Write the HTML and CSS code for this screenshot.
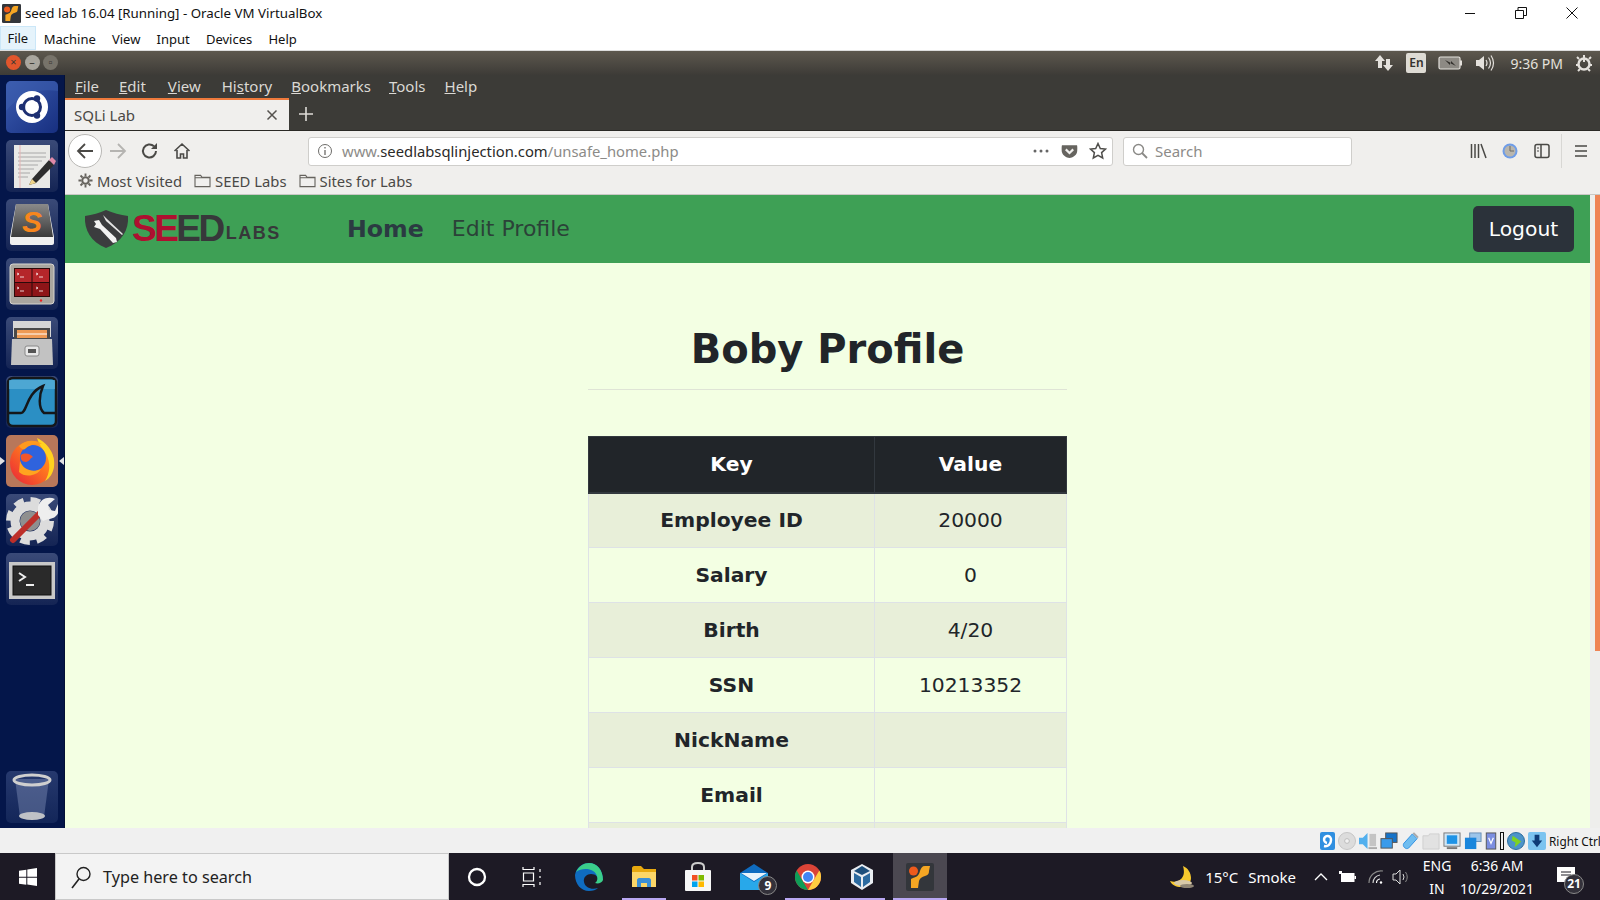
FILE: index.html
```html
<!DOCTYPE html>
<html lang="en">
<head>
<meta charset="utf-8">
<title>seed lab 16.04 [Running] - Oracle VM VirtualBox</title>
<link rel="stylesheet" href="styles.css">
</head>
<body>
<svg class="defs" width="0" height="0">
  <symbol id="vmicon" viewBox="0 0 28 28">
    <rect width="28" height="28" rx="2" fill="#33363b"/>
    <circle cx="7.5" cy="8" r="4.5" fill="#ee5a1c"/>
    <path d="M24 3h-5c-3 0-4 2-5 5-1 4-3 6-7 7l-2 1v9h7l1-7c1-3 3-4 6-5 3-1 4-2 4-5z" fill="#f5a623"/>
  </symbol>
  <symbol id="folder" viewBox="0 0 18 16">
    <path d="M1 14.500V2.500h6l1.500 2h8.500v10z M1 5h16" fill="#f1f0ee" stroke="#66635e" stroke-width="1.200"/>
  </symbol>
</svg>

<header class="titlebar">
  <svg class="title-icon"><use href="#vmicon"/></svg>
  <span class="title-text">seed lab 16.04 [Running] - Oracle VM VirtualBox</span>
  <div class="winbtns">
    <svg width="12" height="12" viewBox="0 0 12 12"><path d="M1 6.500h10" stroke="#111" fill="none"/></svg>
    <svg width="12" height="12" viewBox="0 0 12 12"><path d="M.5 3.500h8v8h-8z M3 3.500V.5h8.500v8H8.500" stroke="#111" fill="none"/></svg>
    <svg width="12" height="12" viewBox="0 0 12 12"><path d="M.5.500l11 11M11.500.500l-11 11" stroke="#111" fill="none"/></svg>
  </div>
</header>
<nav class="vbmenu">
  <span class="vbitem vbactive">File</span><span class="vbitem">Machine</span><span class="vbitem">View</span><span class="vbitem">Input</span><span class="vbitem">Devices</span><span class="vbitem">Help</span>
</nav>

<div class="screen">
  <div class="panel">
    <div class="panelbtns">
      <span class="pbtn pclose">×</span><span class="pbtn pmin">–</span><span class="pbtn pmax">▫</span>
    </div>
    <div class="indicators">
      <svg class="ind-arrows" width="20" height="20" viewBox="0 0 20 20"><path d="M6 2l5 6H8v7H4V8H1z" fill="#e4e1dc"/><path d="M14 18l-5-6h3V6h4v6h3z" fill="#e4e1dc"/></svg>
      <span class="ind-en">En</span>
      <svg class="ind-batt" width="24" height="14" viewBox="0 0 24 14"><rect x="1" y="1" width="21" height="12" rx="1.500" fill="#8d8a84" stroke="#e4e1dc" stroke-width="1.200"/><rect x="22" y="4.500" width="2" height="5" fill="#e4e1dc"/><path d="M7 4l6 3 0-2 5 5-6-3 0 2z" fill="#2f2d29"/></svg>
      <svg class="ind-vol" width="20" height="18" viewBox="0 0 20 18"><path d="M1 6h3l5-4v14l-5-4H1z" fill="#e4e1dc"/><path d="M11 6q2 3 0 6M13.500 3.500q4 5.500 0 11M16 1.500q5 7.500 0 15" fill="none" stroke="#e4e1dc" stroke-width="1.200"/></svg>
      <span class="ind-time">9:36 PM</span>
      <svg class="ind-gear" width="18" height="18" viewBox="0 0 18 18"><circle cx="9" cy="10" r="5.500" fill="none" stroke="#e4e1dc" stroke-width="2.500"/><path d="M9 1v7" stroke="#e4e1dc" stroke-width="2"/><path d="M2 3l2 2M16 3l-2 2M1 11h2M15 11h2M3 17l2-2M15 17l-2-2" stroke="#e4e1dc" stroke-width="2"/></svg>
    </div>
  </div>
  <div class="desktop">
    <aside class="launcher">
      <div class="tile tile-ubuntu">
        <svg width="52" height="52" viewBox="0 0 52 52"><path d="M0 30Q20 5 52 10V0H0z" fill="#3d5fb0" opacity=".5"/><circle cx="26" cy="26" r="16" fill="#fff"/><circle cx="26" cy="26" r="8.500" fill="none" stroke="#1d2f72" stroke-width="3"/><circle cx="16" cy="26" r="3.200" fill="#1d2f72"/><circle cx="31" cy="17.500" r="3.200" fill="#1d2f72"/><circle cx="31" cy="34.500" r="3.200" fill="#1d2f72"/></svg>
      </div>
      <div class="tile">
        <svg width="52" height="52" viewBox="0 0 52 52"><rect x="8" y="5" width="36" height="43" fill="#e9e9e6"/><path d="M12 13h28M12 17h28M12 21h24M12 25h20M12 29h16M12 33h12M12 37h10" stroke="#a8a8a8"/><path d="M14 5v43" stroke="#e6b3b3"/><path d="M26 39l17-19 5 5-18 18-7 2z" fill="#2d2d2d"/><path d="M43 20l3-3 4 4-2 4z" fill="#e08aa8"/><path d="M26 39l4 4-7 2z" fill="#eed48a"/></svg>
      </div>
      <div class="tile">
        <svg width="52" height="52" viewBox="0 0 52 52"><defs><linearGradient id="subl" x1="0" y1="0" x2="0" y2="1"><stop offset="0" stop-color="#8a8a8a"/><stop offset="1" stop-color="#3a3a3a"/></linearGradient></defs><path d="M10 5h32l6 33v6c0 1-1 2-2 2H6c-1 0-2-1-2-2v-6z" fill="#f0f0f0"/><path d="M10 5h32l5 33H5z" fill="url(#subl)"/><text x="26" y="33" class="sublime">S</text></svg>
      </div>
      <div class="tile">
        <svg width="52" height="52" viewBox="0 0 52 52"><rect x="4" y="6" width="44" height="40" rx="3" fill="#a9a69f" stroke="#d8d6d0"/><rect x="8" y="10" width="36" height="29" fill="#2b0a0a"/><rect x="9" y="11" width="16.500" height="13" fill="#b5262a"/><rect x="26.500" y="11" width="16.500" height="13" fill="#b5262a"/><rect x="9" y="25" width="16.500" height="13" fill="#8e1518"/><rect x="26.500" y="25" width="16.500" height="13" fill="#8e1518"/><path d="M11 15l2 1-2 1M30 15l2 1-2 1M11 29l2 1-2 1M30 29l2 1-2 1M14 19h4M33 19h4M14 33h4M33 33h4" stroke="#fff" fill="none" stroke-width=".8"/><circle cx="35" cy="42.500" r="1.200" fill="#e22"/></svg>
      </div>
      <div class="tile">
        <svg width="52" height="52" viewBox="0 0 52 52"><path d="M7 4h38v16H7z" fill="#d6d6d6"/><path d="M8 11h36v13H8z" fill="#4a4a4a"/><path d="M11 13h30v8H11z" fill="#ee9a55"/><path d="M11 17h30" stroke="#fff"/><path d="M6 22h40l1 26H5z" fill="#c2c2c2"/><rect x="19" y="29" width="14" height="10" rx="2" fill="#e8e8e8" stroke="#888"/><rect x="22" y="32" width="8" height="4" fill="#555"/></svg>
      </div>
      <div class="tile">
        <svg width="52" height="52" viewBox="0 0 52 52"><rect x="2" y="2" width="48" height="48" rx="5" fill="#2b8fc4" stroke="#14171a" stroke-width="2.500"/><path d="M3 4h46v9H3z" fill="#5db0da" opacity=".7"/><path d="M3 37h12c6 0 5-20 22-27-4 9-5 22 1 27h11" fill="none" stroke="#14171a" stroke-width="2.500"/></svg>
      </div>
      <div class="tile tile-firefox">
        <svg width="52" height="52" viewBox="0 0 52 52"><defs><linearGradient id="ffx" x1="0" y1="1" x2="1" y2="0"><stop offset="0" stop-color="#e8203a"/><stop offset=".6" stop-color="#ff7a1e"/><stop offset="1" stop-color="#ffb71f"/></linearGradient></defs><circle cx="26" cy="28" r="22" fill="url(#ffx)"/><path d="M31 3c11 5 19 17 17 29-1 6-4 11-9 14 5-8 6-18 1-27-3-5-7-9-9-16z" fill="#ffd21f"/><circle cx="27" cy="23" r="13" fill="#2f63dd"/><path d="M13 11c6-6 16-7 23-2-7-1-13 1-17 5-1 1-4 0-6-3z" fill="#ff9a1e"/><path d="M14 26c3 9 13 12 21 8-4 7-16 9-22 3z" fill="#ffa41f"/><path d="M15 20c5-3 9-1 12 2-3 1-4 5-7 5-4 0-6-3-5-7z" fill="#f0562c"/></svg>
      </div>
      <div class="tile">
        <svg width="52" height="52" viewBox="0 0 52 52"><circle cx="24" cy="27" r="15" fill="none" stroke="#dcdcdc" stroke-width="9"/><circle cx="24" cy="27" r="21" fill="none" stroke="#dcdcdc" stroke-width="6" stroke-dasharray="9.500 6.980"/><circle cx="24" cy="27" r="10" fill="#8f8f8f"/><path d="M7 46L36 17" stroke="#bd2f2a" stroke-width="6" stroke-linecap="round"/><path d="M32 13c2-8 10-11 17-8l-7 6 1 5 6 1 3-7c3 7-1 15-10 15l-5 2-5-6z" fill="#eee"/></svg>
      </div>
      <div class="tile">
        <svg width="52" height="52" viewBox="0 0 52 52"><rect x="3" y="9" width="46" height="37" fill="#c8c8c8"/><rect x="7" y="13" width="38" height="29" fill="#2a2a2a" stroke="#111"/><path d="M13 20l6 4-6 4" fill="none" stroke="#eee" stroke-width="2"/><path d="M20 32h8" stroke="#eee" stroke-width="2"/></svg>
      </div>
      <div class="tile tile-trash">
        <svg width="52" height="52" viewBox="0 0 52 52"><path d="M9 8h34l-5 38H14z" fill="#7f8fb6" opacity=".45"/><ellipse cx="26" cy="9" rx="18" ry="5" fill="none" stroke="#cfcfcf" stroke-width="3"/><ellipse cx="26" cy="45" rx="13" ry="4" fill="#bfc2c6"/></svg>
      </div>
    </aside>

    <div class="browser">
      <div class="ffmenu">
        <span class="ffitem"><u>F</u>ile</span><span class="ffitem ff-edit"><u>E</u>dit</span><span class="ffitem ff-view"><u>V</u>iew</span><span class="ffitem ff-hist">Hi<u>s</u>tory</span><span class="ffitem ff-book"><u>B</u>ookmarks</span><span class="ffitem ff-tools"><u>T</u>ools</span><span class="ffitem"><u>H</u>elp</span>
      </div>
      <div class="tabs">
        <div class="tab">
          <span>SQLi Lab</span>
          <svg width="12" height="12" viewBox="0 0 12 12"><path d="M1.500 1.500l9 9M10.500 1.500l-9 9" stroke="#55524e" stroke-width="1.500"/></svg>
        </div>
        <svg class="newtab" width="16" height="16" viewBox="0 0 16 16"><path d="M8 1v14M1 8h14" stroke="#dedcd8" stroke-width="1.600"/></svg>
      </div>
      <div class="toolbar">
        <span class="backbtn"><svg width="18" height="18" viewBox="0 0 18 18"><path d="M2 9h15M9 2L2 9l7 7" fill="none" stroke="#4a4946" stroke-width="1.800"/></svg></span>
        <svg class="tool-fwd" width="18" height="18" viewBox="0 0 18 18"><path d="M1 9h15M9 2l7 7-7 7" fill="none" stroke="#b5b4b1" stroke-width="1.800"/></svg>
        <svg class="tool-reload" width="18" height="18" viewBox="0 0 18 18"><path d="M15 9a6.500 6.500 0 1 1-2-4.700" fill="none" stroke="#4a4946" stroke-width="2"/><path d="M16 1v6h-6z" fill="#4a4946"/></svg>
        <svg class="tool-home" width="18" height="18" viewBox="0 0 18 18"><path d="M1.500 9L9 2l7.500 7M4 8v8h3.500v-4h3v4H14V8" fill="none" stroke="#4a4946" stroke-width="1.600"/></svg>
        <div class="urlbar">
          <svg class="url-info" width="16" height="16" viewBox="0 0 16 16"><circle cx="8" cy="8" r="6.500" fill="none" stroke="#6d6c69"/><path d="M8 7v5M8 4v1.500" stroke="#6d6c69" stroke-width="1.300"/></svg>
          <span class="url-text"><span class="url-dim">www.</span>seedlabsqlinjection.com<span class="url-dim">/unsafe_home.php</span></span>
          <svg class="url-dots" width="16" height="4" viewBox="0 0 16 4"><circle cx="2" cy="2" r="1.500" fill="#666"/><circle cx="8" cy="2" r="1.500" fill="#666"/><circle cx="14" cy="2" r="1.500" fill="#666"/></svg>
          <svg class="url-pocket" width="17" height="17" viewBox="0 0 16 16"><path d="M1 2h14c.5 0 .5 6 0 7-1 3-4 5-7 5s-6-2-7-5C.5 8 .5 2 1 2z" fill="#66645f"/><path d="M4.500 6L8 9.500 11.500 6" fill="none" stroke="#f1f0ee" stroke-width="2"/></svg>
          <svg class="url-star" width="18" height="18" viewBox="0 0 18 18"><path d="M9 1.500l2.300 5 5.200.6-3.900 3.500 1.100 5.400L9 13.300 4.300 16l1.100-5.400L1.500 7.100l5.200-.6z" fill="none" stroke="#4f4e4b" stroke-width="1.500"/></svg>
        </div>
        <div class="searchbar">
          <svg width="16" height="16" viewBox="0 0 16 16"><circle cx="6.500" cy="6.500" r="5" fill="none" stroke="#8a8986" stroke-width="1.400"/><path d="M10 10l5 5" stroke="#8a8986" stroke-width="1.800"/></svg>
          <span>Search</span>
        </div>
        <div class="tool-right">
          <svg class="tr-lib" width="17" height="16" viewBox="0 0 17 16"><path d="M1.500 1v14M5 1v14M8.500 1v14M11 1l5 14" fill="none" stroke="#4a4946" stroke-width="1.500"/></svg>
          <svg class="tr-sync" width="16" height="16" viewBox="0 0 16 16"><circle cx="8" cy="8" r="7.500" fill="#6f9de8"/><circle cx="8" cy="8" r="5.500" fill="#b9b6ae"/><path d="M8 3v5h4" fill="none" stroke="#6b6a66"/></svg>
          <svg class="tr-side" width="16" height="16" viewBox="0 0 16 16"><rect x="1" y="1.500" width="14" height="13" rx="2" fill="none" stroke="#4a4946" stroke-width="1.500"/><path d="M7 2v12" stroke="#4a4946" stroke-width="1.500"/><path d="M3 5h2M3 8h2" stroke="#4a4946"/></svg>
          <span class="tr-sep"></span>
          <svg class="tr-menu" width="14" height="14" viewBox="0 0 14 14"><path d="M1 2h12M1 7h12M1 12h12" stroke="#4a4946" stroke-width="1.600"/></svg>
        </div>
      </div>
      <div class="bookmarks">
        <span class="bm bm-first"><svg width="15" height="15" viewBox="0 0 16 16"><circle cx="8" cy="8" r="3.500" fill="none" stroke="#66635e" stroke-width="2.200"/><path d="M8 .5v3M8 12.500v3M.5 8h3M12.500 8h3M2.700 2.700l2.100 2.100M11.200 11.200l2.100 2.100M13.300 2.700l-2.100 2.100M4.800 11.200l-2.100 2.100" stroke="#66635e" stroke-width="2"/></svg>Most Visited</span>
        <span class="bm"><svg width="17" height="15"><use href="#folder"/></svg>SEED Labs</span>
        <span class="bm"><svg width="17" height="15"><use href="#folder"/></svg>Sites for Labs</span>
      </div>
      <div class="viewport">
        <div class="page">
          <div class="sitenav">
            <div class="logo">
              <svg width="46" height="40" viewBox="0 0 46 40"><path d="M1 7C8 6 16 4 22 1c7 3 14 5 22 6 1 14-6 26-22 32C7 33 0 21 1 7z" fill="#3b3c3e"/><path d="M12 11l5-1 3 5 14 13 1 4-4 1L18 19l-6-2 2-3z" fill="#f2f2f2" transform="translate(-2 1)"/><path d="M19 6l4 4 16 15-1 1L22 12z" fill="#e4e4e4"/></svg>
              <span class="logo-seed"><span class="logo-red">SE</span>ED</span><span class="logo-labs">LABS</span>
            </div>
            <a class="nav-home">Home</a>
            <a class="nav-edit">Edit Profile</a>
            <button class="logout">Logout</button>
          </div>
          <main class="content">
            <h1 class="profile-title">Boby Profile</h1>
            <hr class="rule">
            <table class="profile">
              <thead><tr><th>Key</th><th>Value</th></tr></thead>
              <tbody>
                <tr><th>Employee ID</th><td>20000</td></tr>
                <tr><th>Salary</th><td>0</td></tr>
                <tr><th>Birth</th><td>4/20</td></tr>
                <tr><th>SSN</th><td>10213352</td></tr>
                <tr><th>NickName</th><td></td></tr>
                <tr><th>Email</th><td></td></tr>
                <tr><th></th><td></td></tr>
              </tbody>
            </table>
          </main>
        </div>
        <div class="scrollbar"><span class="thumb"></span></div>
      </div>
    </div>
  </div>
</div>

<div class="statusbar">
  <svg class="sb-first" viewBox="0 0 15 18"><rect width="15" height="18" rx="2" fill="#2f8fe0"/><path d="M4 14c4 1 7-2 7-6a3.500 3.500 0 1 0-4 3" fill="none" stroke="#fff" stroke-width="2.500"/></svg>
  <svg viewBox="0 0 19 19"><circle cx="9.500" cy="9.500" r="9" fill="#dcdcdc" stroke="#c4c4c4"/><circle cx="9.500" cy="9.500" r="2.500" fill="#f2f2f2" stroke="#bbb"/></svg>
  <svg viewBox="0 0 19 19"><path d="M0 6h4l5-5v17l-5-5H0z" fill="#52b0ee"/><rect x="11" y="2" width="7" height="13" fill="#c4c4c4"/><path d="M10 17h9" stroke="#aaa" stroke-width="2"/></svg>
  <svg viewBox="0 0 19 19"><rect x="6" y="1" width="12" height="10" fill="#1673c8" stroke="#555"/><rect x="1" y="7" width="12" height="10" fill="#3a9bea" stroke="#555"/></svg>
  <svg viewBox="0 0 19 19"><path d="M12 2l5 5-9 10c-3 2-7-2-5-5z" fill="#6fbdf0" stroke="#2f8fe0"/><path d="M13 1l5 5" stroke="#aaa" stroke-width="2"/></svg>
  <svg viewBox="0 0 19 19"><path d="M1 4h6l1-2h10v16H1z" fill="#e2e2e2" stroke="#cfcfcf"/></svg>
  <svg viewBox="0 0 19 19"><rect x="1" y="1" width="17" height="14" fill="#d0e6f5" stroke="#777"/><rect x="4" y="3.500" width="11" height="9" fill="#1e93e6"/><path d="M4 17h11" stroke="#777" stroke-width="2"/></svg>
  <svg viewBox="0 0 19 19"><rect x="6" y="1" width="12" height="9" fill="#9cc5ea" stroke="#6a8fb5"/><rect x="1" y="6" width="12" height="12" fill="#1a86dc"/></svg>
  <svg class="sb-chip" viewBox="0 0 12 19"><rect x="1" y="1" width="10" height="17" fill="#7c8ee0" stroke="#555"/><path d="M3.500 6l2.500 6 2.500-6" fill="none" stroke="#fff" stroke-width="1.300"/></svg>
  <span class="sb-bar"></span>
  <svg viewBox="0 0 19 19"><circle cx="9.500" cy="9.500" r="9" fill="#4c94c9" stroke="#2a6a9c"/><path d="M6 4l9 6-7 6 1-5-4-2z" fill="#7ed321"/></svg>
  <svg viewBox="0 0 19 19"><rect width="19" height="19" rx="2" fill="#7cc4f0"/><path d="M7 3h5v6h3l-5.500 7L4 9h3z" fill="#0e3c78"/></svg>
  <span class="sb-text">Right Ctrl</span>
</div>

<footer class="taskbar">
  <div class="start"><svg width="18" height="18" viewBox="0 0 18 18"><path d="M0 2.700l7.300-1v7H0zM8.300 1.600L18 0v8.700H8.300zM0 9.700h7.300v7l-7.300-1zM8.300 9.700H18V18l-9.700-1.400z" fill="#fff"/></svg></div>
  <div class="tsearch">
    <svg width="22" height="24" viewBox="0 0 22 24"><circle cx="13.500" cy="9" r="6.500" fill="none" stroke="#222" stroke-width="1.400"/><path d="M9 14L2 23" stroke="#222" stroke-width="1.600"/></svg>
    <span>Type here to search</span>
  </div>
  <div class="titem titem-sys"><svg width="20" height="20" viewBox="0 0 20 20"><circle cx="10" cy="10" r="8" fill="none" stroke="#fff" stroke-width="2.300"/></svg></div>
  <div class="titem titem-sys"><svg width="22" height="22" viewBox="0 0 22 22"><path d="M2 1v2.500h11V1M2 21v-2.500h11V21M2.500 7h10v8h-10zM19 3v3M19 10v2M19 16v3" fill="none" stroke="#fff" stroke-width="1.200"/></svg></div>
  <div class="apps">
    <div class="titem"><svg width="28" height="28" viewBox="0 0 28 28"><path d="M14 0C6 0 1 6 0 12c0 9 6 16 14 16 4 0 7-1 9-3-6 2-13 0-14-6-1-5 3-8 7-8 5 0 7 3 7 6h5C28 7 22 0 14 0z" fill="#0f6cc0"/><path d="M1 9C4 3 9 0 14 0c8 0 14 7 14 17-1 3-5 4-8 3 3-2 3-6 1-9-3-5-13-7-20-2z" fill="#3bce8a"/></svg></div>
    <div class="titem titem-open"><svg width="26" height="24" viewBox="0 0 26 24"><path d="M1 3c0-1 1-2 2-2h7l3 3h12v18H1z" fill="#e8a90f"/><path d="M1 7h24v15H1z" fill="#fcd668"/><path d="M6 22v-7c0-1 1-2 2-2h10c1 0 2 1 2 2v7h-4v-4h-6v4z" fill="#3b8fd6"/></svg></div>
    <div class="titem"><svg width="28" height="30" viewBox="0 0 28 30"><path d="M8 9V5c0-3 2-4 6-4s6 1 6 4v4" fill="none" stroke="#ccc" stroke-width="2"/><rect x="1" y="8" width="26" height="21" rx="1" fill="#f7f7f7"/><rect x="8" y="13" width="5.500" height="5.500" fill="#f25022"/><rect x="14.500" y="13" width="5.500" height="5.500" fill="#7fba00"/><rect x="8" y="19.500" width="5.500" height="5.500" fill="#00a4ef"/><rect x="14.500" y="19.500" width="5.500" height="5.500" fill="#ffb900"/></svg></div>
    <div class="titem titem-mail">
      <svg width="28" height="26" viewBox="0 0 28 26"><path d="M14 0l14 9v17H0V9z" fill="#0f6cc0"/><path d="M1 9h26L14 17z" fill="#e8f3fb"/><path d="M0 9l14 9 14-9v17H0z" fill="#28a8ea"/></svg>
      <span class="tbadge tbadge-mail">9</span>
    </div>
    <div class="titem titem-open"><svg width="26" height="26" viewBox="0 0 26 26"><circle cx="13" cy="13" r="13" fill="#db4437"/><path d="M13 26A13 13 0 0 1 1.700 6.500L8 17.500l5 8.500z" fill="#0f9d58"/><path d="M13 26l6-10.500 5.300-9C26 9 26 11 26 13a13 13 0 0 1-13 13z" fill="#ffcd40"/><circle cx="13" cy="13" r="6.500" fill="#fff"/><circle cx="13" cy="13" r="5" fill="#4285f4"/></svg></div>
    <div class="titem titem-open"><svg width="24" height="28" viewBox="0 0 24 28"><path d="M12 1l11 6v13l-11 7L1 20V7z" fill="#e9edf2"/><path d="M12 3l8 5-8 4-8-4z" fill="#1d4f7c"/><path d="M4 10l7 4v10l-7-5zM13 14l7-4v9l-7 5z" fill="#2b6aa0"/></svg></div>
    <div class="titem titem-active"><svg width="28" height="28"><use href="#vmicon"/></svg></div>
  </div>
  <div class="tray">
    <svg class="tr-moon" width="26" height="24" viewBox="0 0 26 24"><path d="M14 1c2 7 1 12-5 15-3 1-5 1-8 0 2 4 6 6 11 6 6 0 10-4 10-9 0-5-3-10-8-12z" fill="#f8c92d"/><ellipse cx="14" cy="18" rx="9" ry="3" fill="#d8c9a8"/><ellipse cx="18" cy="21" rx="7" ry="2" fill="#8f8574"/></svg>
    <span class="tr-temp">15°C</span>
    <span class="tr-smoke">Smoke</span>
    <svg class="tr-chev" width="14" height="8" viewBox="0 0 14 8"><path d="M1 7l6-6 6 6" fill="none" stroke="#fff" stroke-width="1.300"/></svg>
    <svg class="tr-battery" width="18" height="14" viewBox="0 0 18 14"><rect x="3.500" y="3.500" width="12.500" height="8" fill="#fff" stroke="#fff"/><path d="M1 1h3v3H1z" fill="#fff"/><rect x="16.500" y="6" width="1.500" height="3" fill="#fff"/></svg>
    <svg class="tr-wifi" width="16" height="14" viewBox="0 0 16 14"><path d="M1 13A12 12 0 0 1 15 1" fill="none" stroke="#888" stroke-width="1.200"/><path d="M5 13a8 8 0 0 1 7-8" fill="none" stroke="#ccc" stroke-width="1.200"/><path d="M8.500 13a4 4 0 0 1 3.500-4" fill="none" stroke="#fff" stroke-width="1.200"/><circle cx="13" cy="12.500" r="1.200" fill="#fff"/></svg>
    <svg class="tr-volume" width="18" height="16" viewBox="0 0 18 16"><path d="M1 5h3l4-4v14l-4-4H1z" fill="none" stroke="#ddd"/><path d="M11 5q2 3 0 6" fill="none" stroke="#ddd"/><path d="M13.500 3q3.500 5 0 10" fill="none" stroke="#888"/></svg>
    <div class="tr-lang"><span>ENG</span><span>IN</span></div>
    <div class="tr-clock"><span>6:36 AM</span><span>10/29/2021</span></div>
    <div class="tr-notif">
      <svg width="18" height="15" viewBox="0 0 18 15"><rect width="18" height="15" fill="#fff"/><path d="M4 5h10M4 8h10" stroke="#1d1a25"/></svg>
      <span class="tbadge tbadge-notif">21</span>
    </div>
  </div>
</footer>
</body>
</html>
```
FILE: styles.css
```css
* { box-sizing: border-box; }
html, body { margin: 0; height: 900px; overflow: hidden; }
body {
  width: 1600px;
  display: flex;
  flex-direction: column;
  background: #fff;
  font-family: "Noto Sans", sans-serif;
  color: #111;
}
.defs { position: absolute; }

/* VirtualBox window */
.titlebar { height: 26px; flex: none; display: flex; align-items: center; padding-left: 2px; background: #fff; }
.title-icon { width: 19px; height: 19px; flex: none; }
.title-text { margin-left: 4px; font-size: 13.300px; }
.winbtns { margin-left: auto; display: flex; gap: 39px; padding-right: 22px; }
.vbmenu { height: 25px; flex: none; display: flex; background: #fff; border-bottom: 1px solid #ddd; font-size: 13px; }
.vbitem { padding: 1px 8.100px 0; line-height: 24px; }
.vbactive { background: #e5f3fb; border: 1px solid #cbe7f8; line-height: 22px; padding: 0 6.400px; }

/* Guest screen */
.screen { height: 777px; flex: none; display: flex; flex-direction: column; overflow: hidden; }
.panel {
  height: 24px; flex: none; display: flex; align-items: center; justify-content: space-between;
  background: linear-gradient(#5d584e, #3d3b37);
}
.panelbtns { display: flex; gap: 3.500px; padding: 0 0 2px 6px; }
.pbtn { width: 15px; height: 15px; border-radius: 50%; font-size: 11px; line-height: 14px; text-align: center; color: #3a3833; }
.pclose { background: #e2562c; }
.pmin { background: #a9a69e; }
.pmax { background: #77736a; }
.indicators { display: flex; align-items: center; color: #e4e1dc; font-size: 14px; }
.ind-arrows { margin-right: 12px; }
.ind-en { width: 20px; height: 20px; background: #dedbd4; color: #33312d; border-radius: 2px; font-size: 12px; line-height: 20px; text-align: center; font-weight: 600; margin-right: 12px; }
.ind-batt { margin-right: 13px; }
.ind-vol { margin-right: 15px; }
.ind-gear { margin: 0 7px 0 12px; }
.desktop { flex: 1; min-height: 0; display: flex; }

/* Launcher */
.launcher {
  width: 65px; flex: none; display: flex; flex-direction: column; gap: 7px;
  padding: 6px 7px 5px 6px; background: #04164a; border-right: 1px solid #031037;
}
.tile {
  width: 52px; height: 52px; flex: none; border-radius: 5px; overflow: hidden;
  background: linear-gradient(#3a4a78, #142454);
}
.tile svg { display: block; }
.tile-ubuntu { background: linear-gradient(135deg, #3b5cb0, #172f80); }
.tile-firefox { position: relative; overflow: visible; background: #b8775a; }
.tile-firefox::before, .tile-firefox::after {
  content: ""; position: absolute; top: 22px; border: 4px solid transparent; border-width: 4px 5px;
}
.tile-firefox::before { left: -6px; border-left-color: #dfe0e4; }
.tile-firefox::after { right: -6px; border-right-color: #dfe0e4; }
.tile-trash { margin-top: auto; background: linear-gradient(#26396e, #132659); }
.sublime { font: italic 700 30px "Liberation Sans", sans-serif; fill: #f7861d; text-anchor: middle; }

/* Firefox */
.browser { flex: 1; min-width: 0; display: flex; flex-direction: column; }
.ffmenu { height: 23px; flex: none; display: flex; background: #3c3b37; color: #dbd9d4; font-size: 15px; padding: 1px 0 0 10px; }
.ffitem { margin-right: 20px; line-height: 20px; }
.ff-edit { margin-right: 22px; }
.ff-view { margin-right: 21px; }
.ff-hist { margin-right: 19px; }
.ff-book { margin-right: 18px; }
.ff-tools { margin-right: 19px; }
.tabs { height: 33px; flex: none; display: flex; align-items: center; background: #3c3b37; border-bottom: 1px solid #2a2925; }
.tab {
  width: 224px; align-self: stretch; display: flex; align-items: center; justify-content: space-between;
  padding: 0 11px 1px 9px; background: #f0efed; border-top: 2px solid #ef7a3c; color: #4a4946; font-size: 15px;
}
.newtab { margin-left: 9px; }
.toolbar { height: 38px; flex: none; display: flex; align-items: center; padding-top: 2px; background: #f0efed; }
.backbtn {
  width: 34px; height: 34px; margin-left: 3px; flex: none; display: flex; align-items: center; justify-content: center;
  background: #fff; border: 1px solid #b9b8b5; border-radius: 50%;
}
.tool-fwd { margin-left: 7px; }
.tool-reload { margin-left: 14px; }
.tool-home { margin-left: 14px; }
.urlbar {
  width: 805px; height: 29px; margin-left: 117px; flex: none; display: flex; align-items: center;
  background: #fff; border: 1px solid #cfcecb; border-radius: 3px; padding: 0 5px 0 8px; font-size: 14.800px;
}
.url-text { margin-left: 9px; color: #2a2a28; flex: 1; }
.url-dim { color: #8c8b88; }
.url-pocket { margin: 0 11px 0 12px; }
.searchbar {
  width: 229px; height: 29px; margin-left: 10px; flex: none; display: flex; align-items: center; gap: 7px;
  background: #fff; border: 1px solid #cfcecb; border-radius: 3px; padding: 0 8px; color: #8c8b88; font-size: 15px;
}
.tool-right { flex: 1; display: flex; align-items: center; padding-left: 118px; }
.tr-sync { margin-left: 15px; }
.tr-side { margin-left: 16px; }
.tr-sep { width: 1px; height: 34px; background: #d8d7d4; margin-left: 11px; }
.tr-menu { margin-left: 12px; }
.bookmarks { height: 26px; flex: none; display: flex; align-items: center; background: #f0efed; border-bottom: 1px solid #c9c8c5; color: #4a4946; font-size: 14.800px; padding: 0 0 2px 13px; }
.bm { display: inline-flex; align-items: center; gap: 4px; margin-right: 12px; }

/* Web page */
.viewport { flex: 1; min-height: 0; display: flex; }
.page { flex: 1; min-width: 0; background: #f3ffe3; font-family: "DejaVu Sans", sans-serif; color: #212529; }
.scrollbar { width: 10px; flex: none; background: #eeeeec; display: flex; justify-content: flex-end; }
.thumb { width: 5px; height: 456px; background: #ef8455; }
.sitenav { height: 68px; display: flex; align-items: center; background: #3ea055; padding: 0 16px 0 19px; }
.logo { display: flex; align-items: center; width: 263px; height: 40px; }
.logo svg { flex: none; margin-right: 2px; }
.logo-seed { font: 700 37px/40px "Liberation Sans", sans-serif; color: #37383a; letter-spacing: -2.500px; }
.logo-red { color: #ae1030; }
.logo-labs { font: 700 18px "Liberation Sans", sans-serif; color: #37383a; letter-spacing: 1.500px; margin: 8px 0 0 3px; }
.nav-home { font-size: 23.700px; font-weight: 700; color: #2b3a42; }
.nav-edit { font-size: 22px; color: #2b4238; margin-left: 28px; margin-top: -2px; }
.logout {
  margin-left: auto; width: 101px; height: 46px; border: 0; border-radius: 5px;
  background: #2b323a; color: #fff; font: 20.300px "DejaVu Sans", sans-serif;
}
.content { width: 479px; margin: 0 auto; }
.profile-title { margin: 0; padding-top: 62px; font-size: 40px; line-height: 48px; text-align: center; font-weight: 700; }
.rule { margin: 16px 0 46px; border: 0; border-top: 1px solid #dfe4d6; }
.profile { width: 100%; border-collapse: collapse; font-size: 20.300px; text-align: center; table-layout: fixed; }
.profile th:first-child { width: 286px; }
.profile th, .profile td { height: 55px; padding: 0; border: 1px solid #dee2e6; }
.profile thead th { height: 56px; background: #212529; color: #fff; border-color: #32383e; border-bottom-width: 2px; }
.profile tbody tr:nth-child(odd) { background: #e8efd9; }
.profile td { font-weight: 400; }

/* VirtualBox status bar */
.statusbar {
  height: 25px; flex: none; display: flex; align-items: center; justify-content: flex-end; gap: 3px;
  background: #f0f0f0; font-size: 11.800px; padding-top: 1px;
}
.statusbar svg { width: 18px; height: 18px; flex: none; }
.statusbar .sb-first { width: 15px; }
.statusbar .sb-chip { width: 12px; }
.sb-bar { width: 4px; height: 18px; border: 1px solid #111; }
.sb-text { width: 51px; white-space: nowrap; color: #111; }

/* Windows taskbar */
.taskbar { height: 47px; flex: none; display: flex; align-items: stretch; background: #1d1a25; color: #fff; }
.start { width: 55px; display: flex; align-items: center; justify-content: center; }
.tsearch {
  width: 394px; display: flex; align-items: center; gap: 11px; padding-left: 14px;
  background: #f3f3f3; border: 1px solid #c9c9c9; color: #222; font-size: 16.200px;
}
.titem { position: relative; width: 54.600px; flex: none; display: flex; align-items: center; justify-content: center; }
.titem-sys { width: 55px; }
.titem-sys:first-of-type { padding-right: 2px; }
.apps { display: flex; margin-left: 3px; }
.titem-mail { padding-left: 2px; }
.titem-open::after {
  content: ""; position: absolute; bottom: 0; left: 5px; right: 5px; height: 2px; background: #b9a7f2;
}
.titem-active { margin-left: 3px; background: #4b4851; box-shadow: inset 0 -2px #b9a7f2; }
.tbadge {
  position: absolute; width: 19px; height: 19px; border-radius: 50%; border: 1px solid #888; background: #33313a;
  font-size: 12px; font-weight: 700; line-height: 17px; text-align: center; color: #fff;
}
.tbadge-mail { right: 3px; bottom: 5px; }
.tbadge-notif { right: -9px; bottom: -12px; width: 20px; height: 20px; line-height: 18px; }
.tray { flex: 1; display: flex; align-items: center; padding-left: 221.500px; font-size: 15px; }
.tr-temp { margin-left: 10.500px; }
.tr-smoke { margin-left: 10px; }
.tr-chev { margin-left: 18px; }
.tr-battery { margin-left: 10px; }
.tr-wifi { margin-left: 12px; }
.tr-volume { margin-left: 8px; }
.tr-lang, .tr-clock { display: flex; flex-direction: column; align-items: center; gap: 4px; font-size: 14px; line-height: 19px; }
.tr-lang { width: 28px; margin-left: 13px; }
.tr-clock { width: 76px; margin-left: 8px; font-size: 13.900px; }
.tr-notif { position: relative; margin: -4px 0 0 22px; display: flex; }
```
